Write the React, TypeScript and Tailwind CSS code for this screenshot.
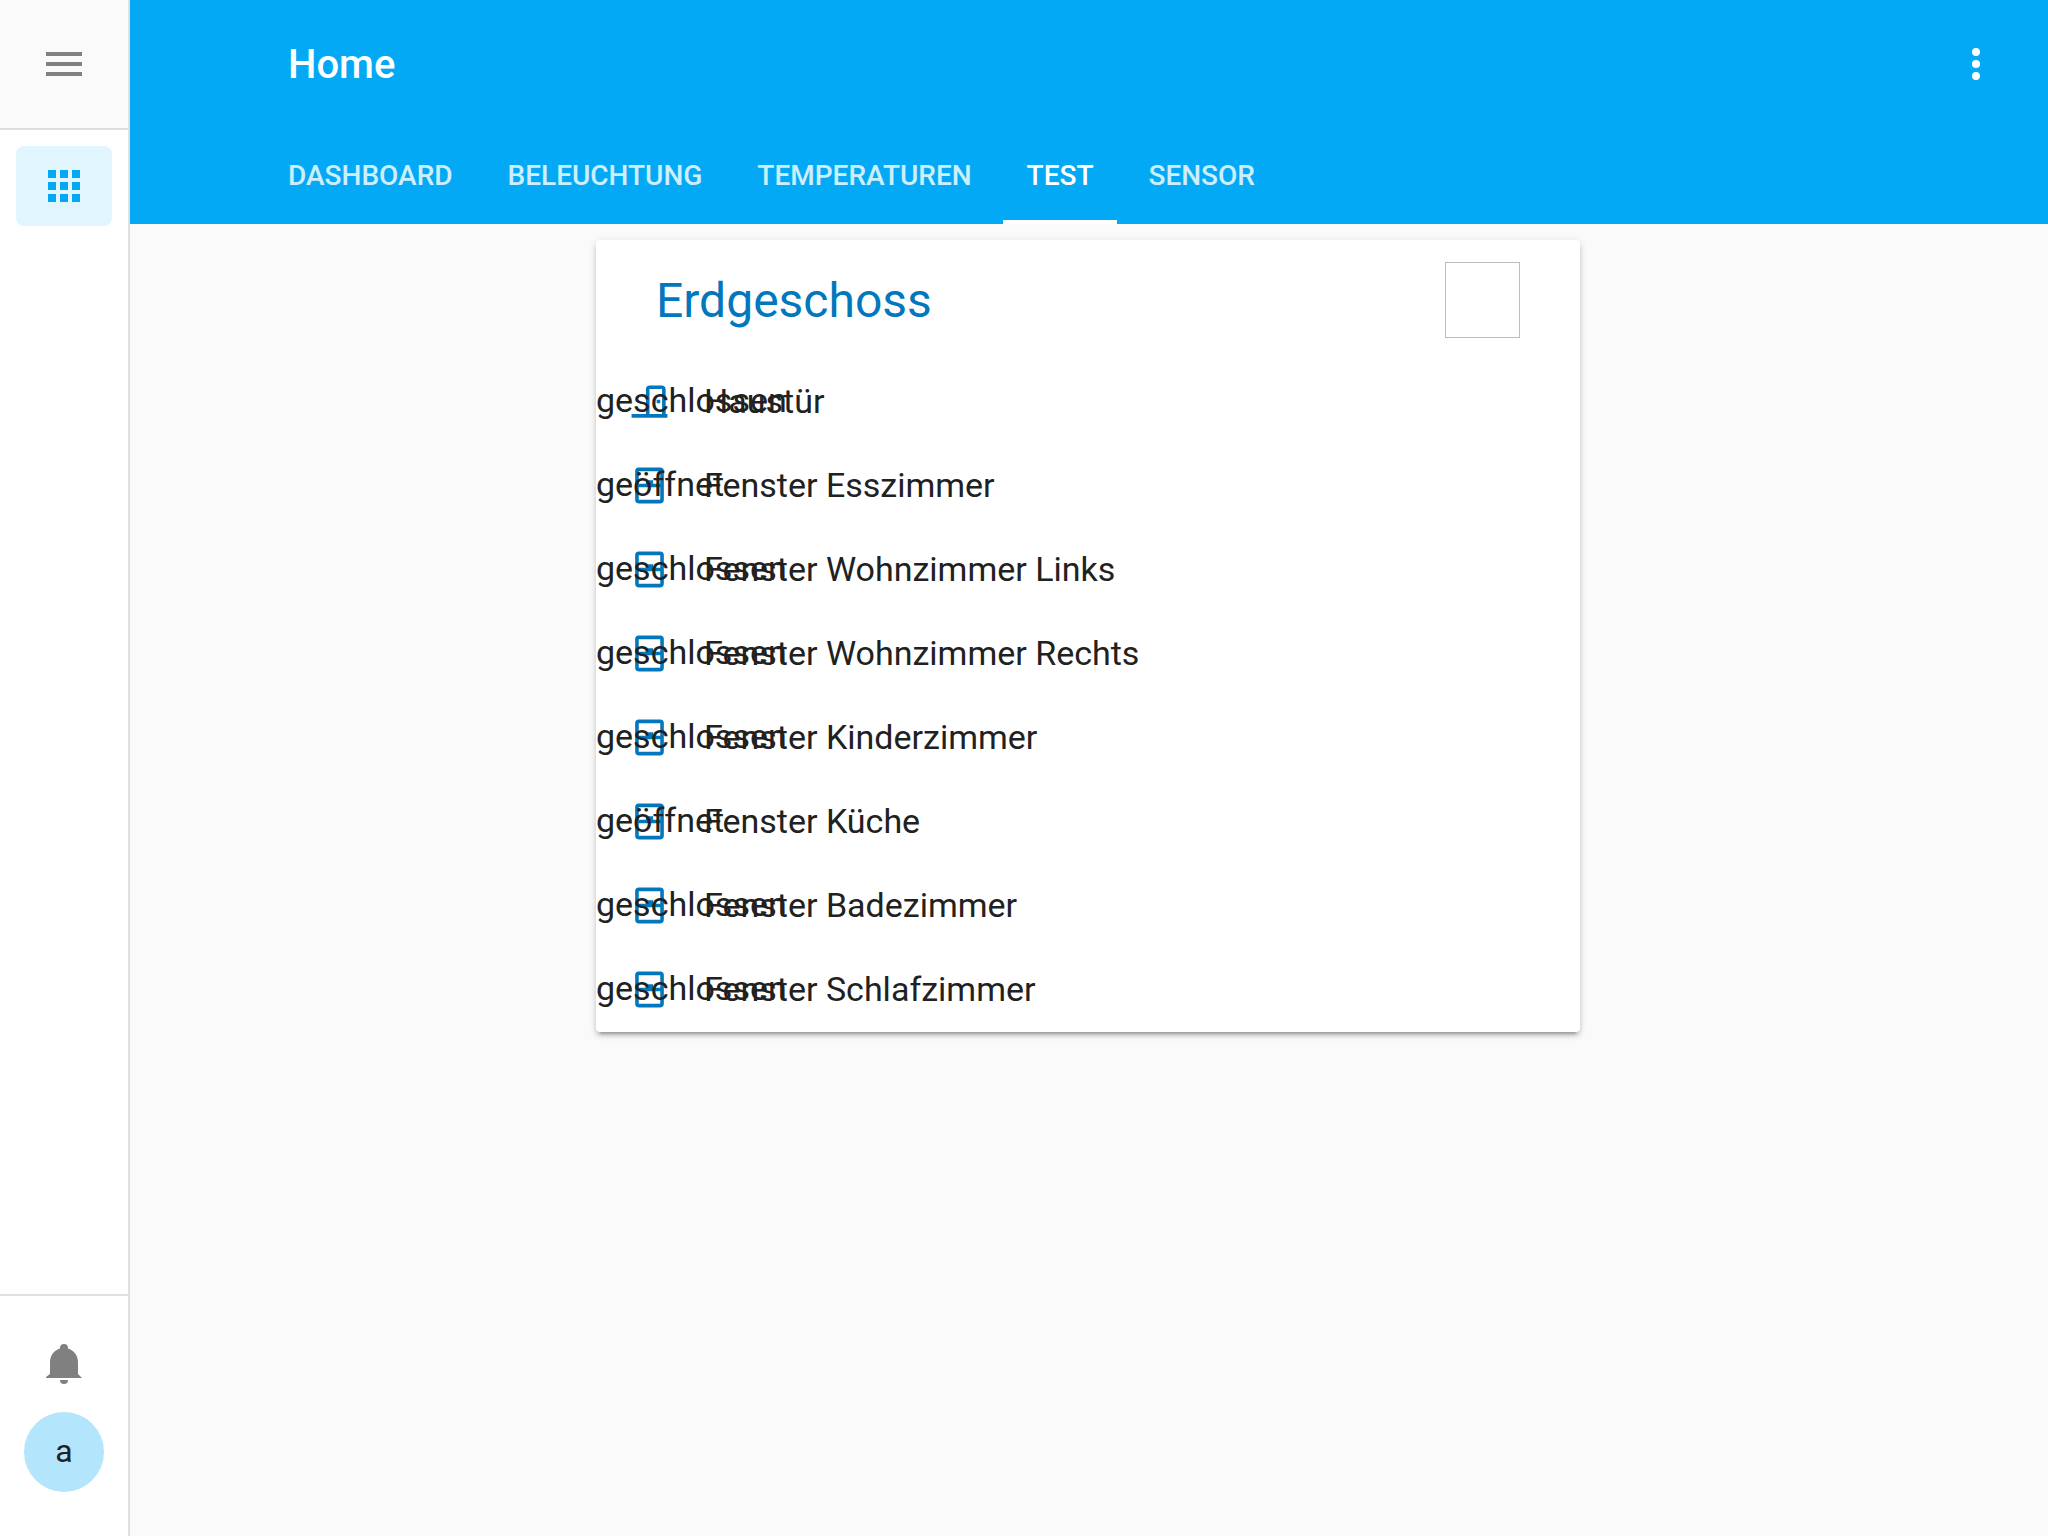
import { useState } from "react";
import clsx from "clsx";

// Material Design icon paths, all on a 24x24 grid
const ICONS = {
  menu: "M3,6H21V8H3V6M3,11H21V13H3V11M3,16H21V18H3V16Z",
  apps: "M16,20H20V16H16M16,14H20V10H16M10,8H14V4H10M16,8H20V4H16M10,14H14V10H10M4,14H8V10H4M4,20H8V16H4M10,20H14V16H10M4,8H8V4H4V8Z",
  bell: "M14,20A2,2 0 0,1 12,22A2,2 0 0,1 10,20H14M12,2A2,2 0 0,1 14,4V4.29C16.89,5.15 19,7.83 19,11V17L21,19H3V19L3,18.5L5,17V11C5,7.83 7.11,5.15 10,4.29V4A2,2 0 0,1 12,2Z",
  dots: "M12,16A2,2 0 0,1 14,18A2,2 0 0,1 12,20A2,2 0 0,1 10,18A2,2 0 0,1 12,16M12,10A2,2 0 0,1 14,12A2,2 0 0,1 12,14A2,2 0 0,1 10,12A2,2 0 0,1 12,10M12,4A2,2 0 0,1 14,6A2,2 0 0,1 12,8A2,2 0 0,1 10,6A2,2 0 0,1 12,4Z",
  door: "M16,11H18V13H16V11M12,3H19C20.11,3 21,3.89 21,5V19H22V21H2V19H10V5C10,3.89 10.89,3 12,3M12,5V19H19V5H12Z",
  window:
    "M6,11H10V9H14V11H18V4H6V11M18,13H6V20H18V13M6,2H18A2,2 0 0,1 20,4V20A2,2 0 0,1 18,22H6A2,2 0 0,1 4,20V4A2,2 0 0,1 6,2Z",
};

type IconName = keyof typeof ICONS;

function Icon({ name, className }: { name: IconName; className: string }) {
  return (
    <svg viewBox="0 0 24 24" aria-hidden="true" className={clsx("shrink-0 fill-current", className)}>
      <path d={ICONS[name]} />
    </svg>
  );
}

const TABS = ["Dashboard", "Beleuchtung", "Temperaturen", "Test", "Sensor"];

type Contact = { name: string; state: "geschlossen" | "geöffnet"; icon: IconName };

const CONTACTS: Contact[] = [
  { name: "Haustür", state: "geschlossen", icon: "door" },
  { name: "Fenster Esszimmer", state: "geöffnet", icon: "window" },
  { name: "Fenster Wohnzimmer Links", state: "geschlossen", icon: "window" },
  { name: "Fenster Wohnzimmer Rechts", state: "geschlossen", icon: "window" },
  { name: "Fenster Kinderzimmer", state: "geschlossen", icon: "window" },
  { name: "Fenster Küche", state: "geöffnet", icon: "window" },
  { name: "Fenster Badezimmer", state: "geschlossen", icon: "window" },
  { name: "Fenster Schlafzimmer", state: "geschlossen", icon: "window" },
];

function Sidebar() {
  return (
    <aside className="relative z-10 flex w-32 shrink-0 flex-col bg-white text-[#808080] shadow-[2px_0_0_#e0e0e0]">
      <div className="flex h-[130px] items-center justify-center border-b-2 border-[#dedede] bg-[#fafafa]">
        <button type="button" aria-label="Menü">
          <Icon name="menu" className="size-12" />
        </button>
      </div>
      <nav className="flex-1 p-4">
        <a
          href="#home"
          aria-label="Home"
          className="flex h-20 items-center justify-center rounded-lg bg-[#e1f5fe] text-[#03a9f4]"
        >
          <Icon name="apps" className="size-12" />
        </a>
      </nav>
      <div className="flex flex-col items-center border-t-2 border-[#e0e0e0] px-6 pt-11 pb-11">
        <button type="button" aria-label="Benachrichtigungen">
          <Icon name="bell" className="size-12" />
        </button>
        <a
          href="#profile"
          className="mt-6 flex size-20 items-center justify-center rounded-full bg-[#b3e5fc] pb-0.5 text-[32px] text-[#212121]"
        >
          a
        </a>
      </div>
    </aside>
  );
}

function Header({ active, onSelect }: { active: string; onSelect: (tab: string) => void }) {
  return (
    <header className="bg-[#03a9f4] text-white">
      <div className="flex h-32 items-center justify-between pr-12 pl-40">
        <h1 className="pt-0.5 text-[40px] font-medium">Home</h1>
        <button type="button" aria-label="Optionen">
          <Icon name="dots" className="size-12" />
        </button>
      </div>
      <div role="tablist" className="flex h-24 gap-[7px] pl-34">
        {TABS.map((tab) => (
          <button
            key={tab}
            type="button"
            role="tab"
            aria-selected={tab === active}
            onClick={() => onSelect(tab)}
            className={clsx(
              "border-b-4 px-6 pt-1 text-[28px] font-medium uppercase",
              tab === active ? "border-white" : "border-transparent text-white/80",
            )}
          >
            {tab}
          </button>
        ))}
      </div>
    </header>
  );
}

function ContactRow({ contact }: { contact: Contact }) {
  return (
    <li className="relative flex h-21 items-center gap-[33px] pb-0.5 pl-8">
      <Icon name={contact.icon} className="size-[43px] text-[#0277bd]" />
      <span>{contact.name}</span>
      {/* state has no column of its own, it sits on top of the icon and name */}
      <span className="absolute inset-y-0 left-0 flex items-center pb-1">{contact.state}</span>
    </li>
  );
}

function ContactsCard() {
  const [on, setOn] = useState(false);
  return (
    <section className="mx-auto max-w-[984px] rounded-sm bg-white text-[#212121] shadow-[0_4px_4px_rgba(0,0,0,0.14),0_2px_10px_rgba(0,0,0,0.12),0_6px_2px_-4px_rgba(0,0,0,0.2)]">
      <div className="flex h-30 items-center justify-between px-15">
        <h2 id="card-title" className="pt-0.5 text-5xl text-[#0277bd]">
          Erdgeschoss
        </h2>
        <input
          type="checkbox"
          aria-labelledby="card-title"
          checked={on}
          onChange={(e) => setOn(e.target.checked)}
          className="h-19 w-[75px] appearance-none border border-[#bdbdbd] checked:bg-[#0277bd]"
        />
      </div>
      <ul className="text-[34px]">
        {CONTACTS.map((contact) => (
          <ContactRow key={contact.name} contact={contact} />
        ))}
      </ul>
    </section>
  );
}

export default function App() {
  const [tab, setTab] = useState("Test");
  return (
    <div className="flex min-h-screen bg-[#fafafa] font-[Roboto,sans-serif]">
      <Sidebar />
      <div className="min-w-0 flex-1">
        <Header active={tab} onSelect={setTab} />
        <main className="p-4">
          <ContactsCard />
        </main>
      </div>
    </div>
  );
}
